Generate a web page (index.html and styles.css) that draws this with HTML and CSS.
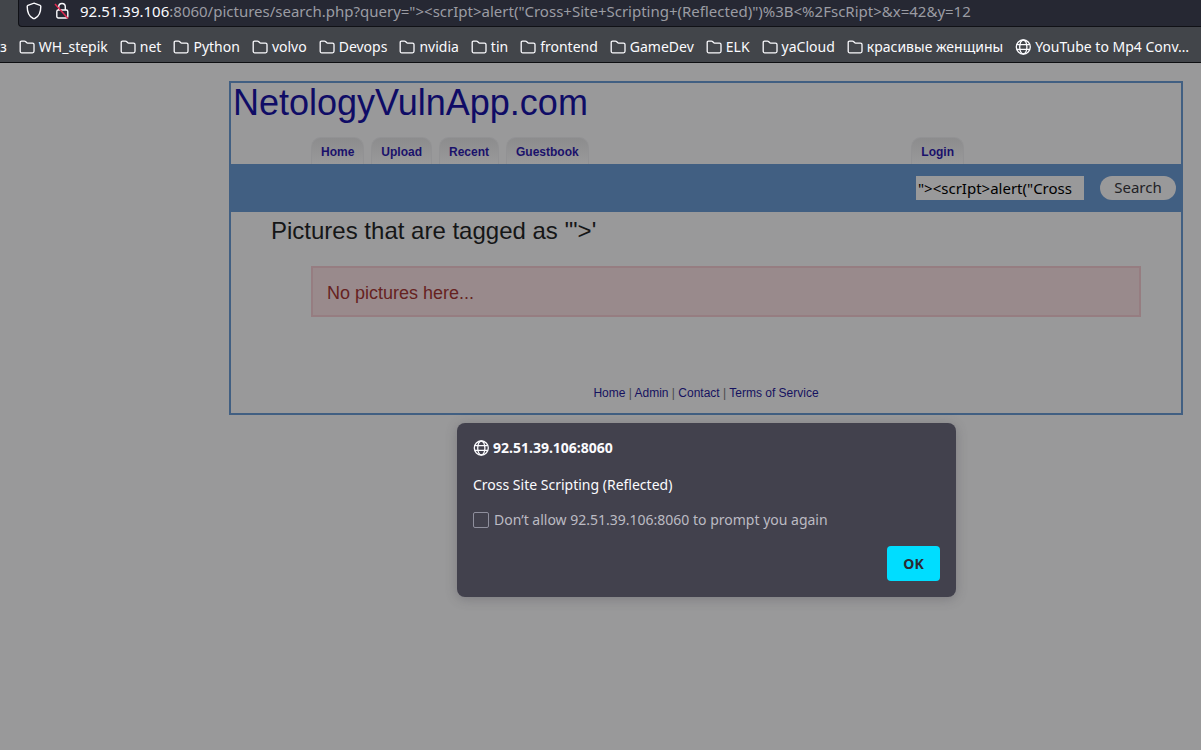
FILE: index.html
```html
<!DOCTYPE html>
<html lang="en">
<head>
<meta charset="utf-8">
<title>NetologyVulnApp.com</title>
<link rel="stylesheet" href="styles.css">
</head>
<body>
<svg class="defs" aria-hidden="true">
  <symbol id="folder" viewBox="0 0 16 16"><path d="M1.200 12.300V3.400c0-.8.500-1.300 1.300-1.300h2.900c.4 0 .8.100 1.100.4l1.300 1.300c.2.200.4.300.700.300h5c.9 0 1.500.6 1.500 1.500v6.700c0 .9-.6 1.500-1.500 1.500H2.700c-.9 0-1.500-.6-1.500-1.500z" fill="none" stroke="currentColor" stroke-width="1.300"/></symbol>
  <symbol id="globe" viewBox="0 0 16 16"><g fill="none" stroke="currentColor" stroke-width="1.300"><circle cx="8.300" cy="8" r="7"/><ellipse cx="8.300" cy="8" rx="3.600" ry="7"/><path d="M1.800 5.700h13M1.800 10.300h13"/></g></symbol>
</svg>
<header class="chrome">
  <div class="urlbar">
    <svg class="shield" viewBox="0 0 16 18" aria-hidden="true"><path d="M8 1.200l6.100 2.200c.5.200.7.500.7 1 0 5.800-1.700 10-6.100 12.100-.5.200-.9.200-1.400 0C2.900 14.400 1.200 10.200 1.200 4.400c0-.5.200-.8.700-1z" fill="none" stroke="#fbfbfe" stroke-width="1.400"/></svg>
    <svg class="lock" viewBox="0 0 16 18" aria-hidden="true"><g fill="none" stroke="#fbfbfe" stroke-width="1.400"><path d="M4.700 8V4.800a3.300 3.300 0 0 1 6.600 0V8"/><rect x="2.800" y="8" width="11" height="8" rx="1.500"/></g><path d="M1 2l13 14.500" stroke="#e22850" stroke-width="1.500"/></svg>
    <span class="url"><b>92.51.39.106</b>:8060/pictures/search.php?query="&gt;&lt;scrIpt&gt;alert("Cross+Site+Scripting+(Reflected)")%3B&lt;%2FscRipt&gt;&amp;x=42&amp;y=12</span>
  </div>
  <nav class="bookmarks" aria-label="Bookmarks">
    <a href="#">з</a>
    <a href="#"><svg><use href="#folder"/></svg>WH_stepik</a>
    <a href="#"><svg><use href="#folder"/></svg>net</a>
    <a href="#"><svg><use href="#folder"/></svg>Python</a>
    <a href="#"><svg><use href="#folder"/></svg>volvo</a>
    <a href="#"><svg><use href="#folder"/></svg>Devops</a>
    <a href="#"><svg><use href="#folder"/></svg>nvidia</a>
    <a href="#"><svg><use href="#folder"/></svg>tin</a>
    <a href="#"><svg><use href="#folder"/></svg>frontend</a>
    <a href="#"><svg><use href="#folder"/></svg>GameDev</a>
    <a href="#"><svg><use href="#folder"/></svg>ELK</a>
    <a href="#"><svg><use href="#folder"/></svg>yaCloud</a>
    <a href="#"><svg><use href="#folder"/></svg>красивые женщины</a>
    <a href="#"><svg><use href="#globe"/></svg>YouTube to Mp4 Conv…</a>
  </nav>
</header>
<div class="site">
  <h1 class="title"><a href="#">NetologyVulnApp.com</a></h1>
  <nav class="tabs" aria-label="Main">
    <a href="#">Home</a><a href="#">Upload</a><a href="#">Recent</a><a href="#">Guestbook</a><a class="login" href="#">Login</a>
  </nav>
  <form class="search">
    <input type="text" aria-label="Search pictures" value="&quot;&gt;&lt;scrIpt&gt;alert(&quot;Cross Site Scripting (Reflected)&quot;);&lt;/scRipt&gt;">
    <button type="button">Search</button>
  </form>
  <main class="content">
    <h2 class="heading">Pictures that are tagged as '"&gt;'</h2>
    <p class="error">No pictures here...</p>
  </main>
  <footer class="footer"><a href="#">Home</a> | <a href="#">Admin</a> | <a href="#">Contact</a> | <a href="#">Terms of Service</a></footer>
</div>
<div class="dialog" role="alertdialog" aria-labelledby="origin" aria-describedby="message">
  <h2 class="origin" id="origin"><svg><use href="#globe"/></svg>92.51.39.106:8060</h2>
  <p class="message" id="message">Cross Site Scripting (Reflected)</p>
  <label class="suppress"><input type="checkbox">Don’t allow 92.51.39.106:8060 to prompt you again</label>
  <button class="ok" type="button">OK</button>
</div>
</body>
</html>
```
FILE: styles.css
```css
* { box-sizing: border-box; }
body {
  margin: 0;
  min-height: 100vh;
  overflow: hidden;
  background: #99999a;
  color: #151617;
  font-family: "Liberation Sans", sans-serif;
}
a { color: inherit; text-decoration: none; }
h1, h2, p { margin: 0; font-weight: normal; }
.defs { position: absolute; width: 0; height: 0; }

.chrome {
  height: 63px;
  background: #42454a;
  border-bottom: 1px solid #0e0f12;
  color: #fbfbfe;
  font-family: "Noto Sans", sans-serif;
}
.urlbar {
  display: flex;
  align-items: center;
  height: 27px;
  margin-left: 18px;
  padding: 0 0 4px 7px;
  background: #262833;
  border: solid #101116;
  border-width: 0 0 1px 1px;
  border-bottom-left-radius: 4px;
}
.shield, .lock { flex: none; width: 16px; height: 18px; }
.lock { margin: 0 10px 0 12px; }
.url { font-size: 15px; line-height: 22px; white-space: nowrap; color: #9b9ca3; }
.url b { font-weight: normal; color: #fbfbfe; }
.bookmarks {
  display: flex;
  align-items: center;
  gap: 12px;
  height: 35px;
  padding: 5px 0 0;
  font-size: 14px;
  line-height: 20px;
  white-space: nowrap;
}
.bookmarks a { display: flex; align-items: center; gap: 4px; }
.bookmarks svg { flex: none; width: 16px; height: 16px; }

.site {
  max-width: 954px;
  margin: 18px 18px 0 auto;
  border: 2px solid #415f82;
}
.title { padding: 0 2px; font-size: 36px; line-height: 40px; color: #0f0c66; }
.tabs { display: flex; gap: 7px; padding: 14px 0 0 80px; }
.tabs a {
  height: 27px;
  padding: 7px 9px 0;
  border: 1px solid #929294;
  border-bottom: 0;
  border-radius: 10px 10px 0 0;
  background: linear-gradient(#8c8c8d, #99999a);
  color: #1a116b;
  font-size: 12px;
  font-weight: bold;
  line-height: 14px;
}
.tabs .login { margin-left: auto; margin-right: 217px; }
.search {
  display: flex;
  justify-content: flex-end;
  gap: 16px;
  padding: 12px 5px;
  background: #415f82;
}
.search input, .search button {
  height: 24px;
  border: 0;
  font: 15px/20px "Noto Sans", sans-serif;
  background: #99999a;
}
.search input { width: 168px; padding: 0 8px 0 2px; color: #000; }
.search button { width: 76px; padding: 0 0 2px; border-radius: 12px; color: #222226; }
.content { padding: 3px 40px 0; }
.heading { font-size: 24px; line-height: 32px; }
.error {
  margin: 19px 0 0 40px;
  padding: 16px 14px 12px;
  border: 2px solid #967d81;
  background: #998a8c;
  color: #66221f;
  font-size: 18px;
  line-height: 19px;
}
.footer { padding: 68px 0 12px; text-align: center; font-size: 12px; line-height: 16px; color: #4a4a4c; }
.footer a { color: #15125f; }

.dialog {
  position: absolute;
  top: 423px;
  right: 245px;
  width: 499px;
  display: flex;
  flex-direction: column;
  align-items: flex-start;
  padding: 16px;
  border-radius: 8px;
  background: #42414d;
  box-shadow: 0 2px 12px rgba(58, 57, 68, 0.3);
  color: #fbfbfe;
  font: 14px/18px "Noto Sans", sans-serif;
}
.origin { display: flex; align-items: center; gap: 4px; font-size: 14px; font-weight: bold; }
.origin svg { width: 16px; height: 16px; }
.message { margin-top: 19px; }
.suppress { display: flex; align-items: center; gap: 5px; margin-top: 17px; color: #bcbbc3; }
.suppress input {
  appearance: none;
  width: 16px;
  height: 16px;
  margin: 0;
  border: 1px solid #8f8f9d;
  border-radius: 2px;
}
.ok {
  align-self: flex-end;
  width: 53px;
  height: 35px;
  margin-top: 17px;
  border: 0;
  border-radius: 4px;
  background: #00ddff;
  color: #2b2a33;
  font: bold 14px/18px "Noto Sans", sans-serif;
}
```
